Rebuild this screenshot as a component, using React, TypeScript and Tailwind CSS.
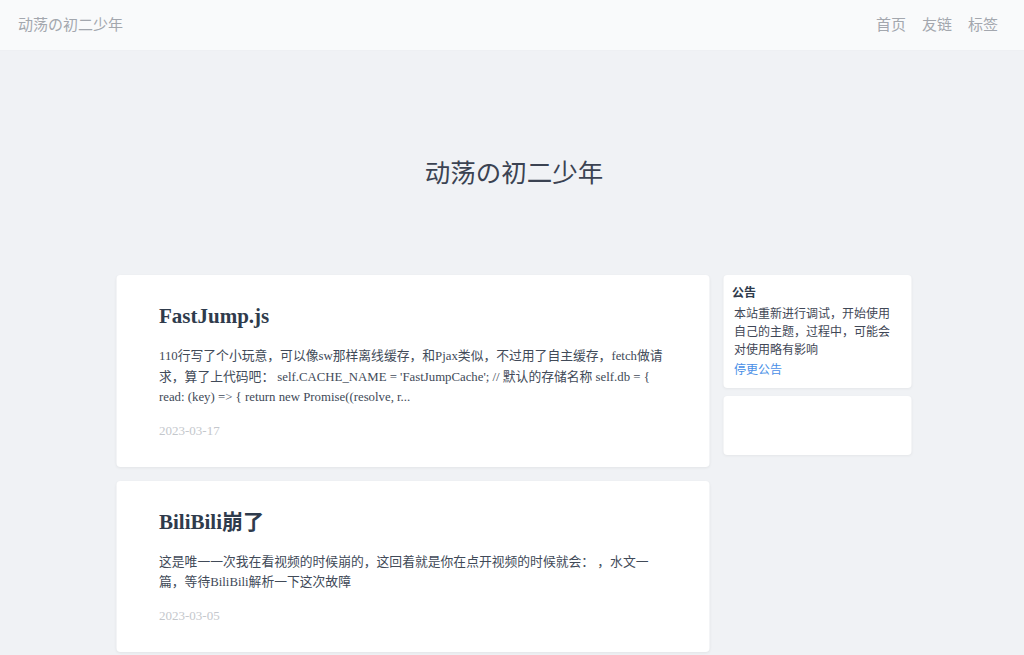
import React from 'react';

const posts = [
  {
    title: 'FastJump.js',
    excerpt:
      "110行写了个小玩意，可以像sw那样离线缓存，和Pjax类似，不过用了自主缓存，fetch做请求，算了上代码吧：  self.CACHE_NAME = 'FastJumpCache'; // 默认的存储名称 self.db = { read: (key) => { return new Promise((resolve, r...",
    date: '2023-03-17',
  },
  {
    title: 'BiliBili崩了',
    excerpt: '这是唯一一次我在看视频的时候崩的，这回着就是你在点开视频的时候就会： ，水文一篇，等待BiliBili解析一下这次故障',
    date: '2023-03-05',
  },
];

const navItems = ['首页', '友链', '标签'];

export default function App() {
  return (
    <div
      className="min-h-screen bg-[#f0f2f5] text-[#374151]"
      style={{ fontFamily: '"Liberation Sans", "Noto Sans CJK SC", sans-serif' }}
    >
      {/* Header */}
      <header className="h-[51px] bg-[#f9fafb] flex items-center justify-between pl-[18px] pr-[26px] border-b border-[#eef0f3]">
        <span className="text-[15px] text-[#a3a7ae]">动荡の初二少年</span>
        <nav className="flex items-center gap-[16px]">
          {navItems.map((item) => (
            <a key={item} className="text-[15px] text-[#a3a7ae]">
              {item}
            </a>
          ))}
        </nav>
      </header>

      {/* Hero */}
      <div className="pt-[104px] pb-[84px] pl-[4px] flex justify-center">
        <h1 className="text-[25.5px] leading-[36px] text-[#3b4352]">动荡の初二少年</h1>
      </div>

      {/* Main */}
      <main className="w-[795px] mx-auto translate-x-[1.5px] flex items-start gap-[14px]">
        <div className="w-[593px] flex flex-col gap-[14px]">
          {posts.map((post) => (
            <article
              key={post.title}
              className="bg-white rounded-[4px] shadow-[0_1px_3px_rgba(0,0,0,0.06)] px-[43px] pt-[28px] pb-[26px]"
              style={{ fontFamily: '"Liberation Serif", "Noto Sans CJK SC", serif' }}
            >
              <h2 className="text-[21px] leading-[26px] font-bold text-[#2f3b4c]">{post.title}</h2>
              <p className="mt-[17px] text-[12.8px] leading-[20.5px] text-[#414a58]">{post.excerpt}</p>
              <div className="mt-[13px] text-[13px] leading-[20px] text-[#c4c7cc]">{post.date}</div>
            </article>
          ))}
        </div>

        <aside className="w-[188px] flex flex-col gap-[8px]">
          <div className="bg-white rounded-[4px] shadow-[0_1px_3px_rgba(0,0,0,0.05)] pl-[9px] pr-[11px] pt-[10px] pb-[9px]">
            <div className="text-[12px] leading-[16px] font-bold text-[#2f3b4c]">公告</div>
            <p className="mt-[4px] pl-[2px] text-[12px] leading-[18px] text-[#3f4756]">
              本站重新进行调试，开始使用自己的主题，过程中，可能会对使用略有影响
            </p>
            <a className="block mt-[2px] pl-[2px] text-[12px] leading-[18px] text-[#4a8fe7]">停更公告</a>
          </div>
          <div className="bg-white rounded-[4px] shadow-[0_1px_3px_rgba(0,0,0,0.05)] h-[59px]" />
        </aside>
      </main>
    </div>
  );
}
